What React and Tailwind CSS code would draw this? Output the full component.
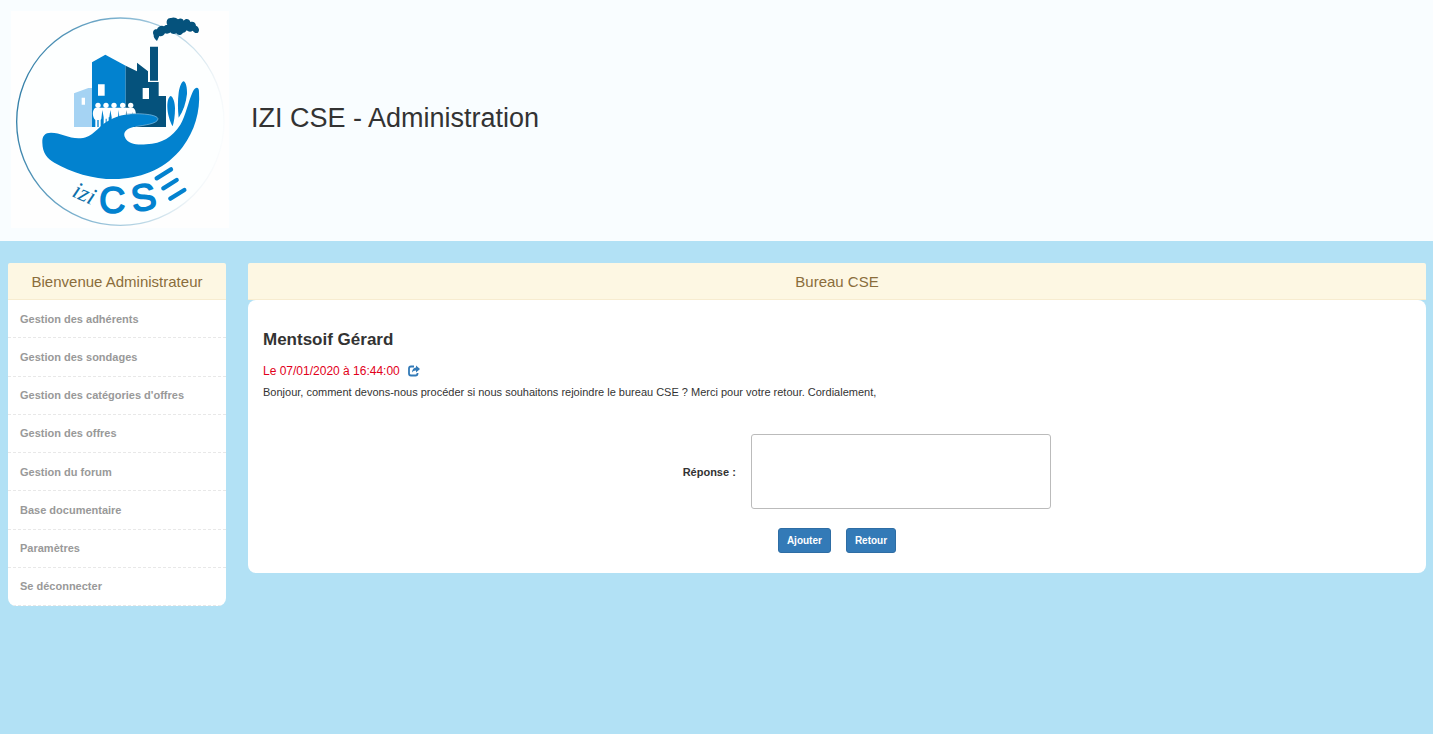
import React from "react";

const MENU = [
  "Gestion des adhérents",
  "Gestion des sondages",
  "Gestion des catégories d'offres",
  "Gestion des offres",
  "Gestion du forum",
  "Base documentaire",
  "Paramètres",
  "Se déconnecter",
];

function Logo() {
  return (
    <svg viewBox="33 33 654 651" className="h-[217px] w-[218px] shrink-0 bg-[#fefefe]" role="img" aria-label="izi CSE">
      <defs>
        <linearGradient id="ring" x1="0" y1="0.4" x2="1" y2="0.6">
          <stop offset="0" stopColor="#3580a8" />
          <stop offset="0.4" stopColor="#7fb3d0" />
          <stop offset="0.7" stopColor="#bcd8e6" />
          <stop offset="0.9" stopColor="#f0f5f8" />
          <stop offset="1" stopColor="#fbfdfe" />
        </linearGradient>
      </defs>
      <circle cx="361" cy="365" r="311" fill="#fdffff" stroke="url(#ring)" strokeWidth="4" />
      <path
        fill="#05527c"
        d="M471 123 C464 116 460 112 461 105 C456 95 462 86 471 88 C474 79 485 75 492 79 C496 75 499 74 502 75 C497 64 502 53 513 54 C520 50 530 53 534 58 C541 53 549 56 551 62 C557 53 569 56 571 66 C580 63 587 68 588 77 C597 81 600 91 594 98 C587 102 581 96 578 92 C573 97 565 96 560 91 C557 97 552 99 549 98 C544 107 533 107 529 100 C521 104 514 101 511 97 C505 103 498 101 495 100 C491 108 484 110 478 108 C475 113 474 118 471 123 Z"
      />
      <path fill="#a5d3f3" d="M222 280 L265 264 H276 V381 H222 Z" />
      <path fill="#0282cf" d="M276 187 L316 164 L377 197 V381 H276 Z" />
      <path fill="#05527c" d="M377 197 L411 214 V188 L444 214 V246 H476 V288 H498 V381 H377 Z M450 140 H474 V242 H450 Z" />
      <path fill="#fff" d="M245 293 H255 V314 H245 Z M294 253 H314 V287 H294 Z M428 264 H447 V297 H428 Z" />
      <g fill="#fff">
        <circle cx="294" cy="316" r="8" />
        <circle cx="318" cy="316" r="8" />
        <circle cx="342" cy="316" r="8" />
        <circle cx="368" cy="316" r="8" />
        <circle cx="392" cy="316" r="8" />
        <path d="M286 323 H398 C405 325 408 334 408 346 L400 350 L397 336 L396 350 H382 L380 330 L378 350 H358 L356 330 L354 352 H349 V381 H344 V356 H341 V381 H335 V352 L331 330 L328 352 H326 V381 H320 V356 H317 V381 H311 V352 L307 330 L304 356 L302 360 V381 H296 V360 H292 V381 H286 V360 C276 350 276 330 286 323 Z" />
      </g>
      <path
        fill="#0282cf"
        d="M127 428 C126 407 135 398 153 398 C180 398 206 414 235 415 C277 415 287 387 319 366 C348 346 383 340 420 341 C447 342 473 345 474 357 C471 374 429 375 400 381 C380 386 369 396 374 410 C384 433 410 435 439 433 C487 430 516 412 541 374 C557 348 565 304 578 276 C586 260 597 259 597 276 C601 334 584 393 548 441 C498 506 431 532 357 537 C286 540 219 520 163 488 C141 475 128 459 127 428 Z"
      />
      <path fill="none" stroke="#8dc0de" strokeWidth="2" d="M376 342 C420 339 473 343 474 357 C471 372 434 375 406 380" />
      <path fill="#0282cf" d="M512 288 C520 291 525 309 525 325 C525 348 522 366 518 379 C510 365 502 340 502 320 C502 305 505 291 512 288 Z M551 244 C558 246 562 265 561 282 C558 309 550 333 536 353 C533 328 533 300 536 278 C539 259 545 245 551 244 Z" />
      <text x="213" y="588" transform="rotate(24 213 588)" fontFamily="Liberation Serif, serif" fontStyle="italic" fontSize="72" fill="#0c70ab">izi</text>
      <text x="298" y="639" fontFamily="Liberation Sans, sans-serif" fontSize="108" fill="#0282cf" stroke="#0282cf" strokeWidth="5" strokeLinejoin="round">C</text>
      <text x="400" y="636" transform="rotate(-9 400 636)" fontFamily="Liberation Sans, sans-serif" fontSize="112" fill="#0282cf" stroke="#0282cf" strokeWidth="5" strokeLinejoin="round">S</text>
      <path fill="none" stroke="#0282cf" strokeWidth="13" strokeLinecap="round" d="M470 535 L513 508 M490 565 L530 540 M511 596 L553 570" />
    </svg>
  );
}

function PanelTitle({ children }) {
  return (
    <h2 className="rounded-t-xs border-b border-[#f7ecd0] bg-[#fdf7e3] pt-[9px] pb-[7px] text-center text-[15px] leading-5 text-[#8a6d3b]">
      {children}
    </h2>
  );
}

export default function App() {
  return (
    <div className="min-h-screen bg-[#b2e1f5] font-['Liberation_Sans',Arial,sans-serif] text-[#333]">
      <header className="flex items-center gap-[22px] bg-[#f9fdff] pt-[11px] pr-2 pb-[13px] pl-[11px]">
        <Logo />
        <h1 className="pb-1 text-[27px] leading-8">IZI CSE - Administration</h1>
      </header>
      <div className="flex items-start gap-[22px] pt-[22px] pr-[7px] pl-2">
        <nav className="w-[218px] shrink-0">
          <PanelTitle>Bienvenue Administrateur</PanelTitle>
          <ul className="grid min-h-[306px] auto-rows-fr overflow-hidden rounded-b-lg bg-white">
            {MENU.map((item) => (
              <li key={item} className="border-b border-dashed border-[#e8e8e8]">
                <a href="#" className="flex h-full items-center px-3 text-[11px] leading-4 font-bold text-[#999]">
                  {item}
                </a>
              </li>
            ))}
          </ul>
        </nav>
        <main className="min-w-0 flex-1">
          <PanelTitle>Bureau CSE</PanelTitle>
          <section className="rounded-lg bg-white pt-7 pb-5">
            <article className="px-[15px]">
              <h3 className="text-[17px] leading-6 font-bold">Mentsoif Gérard</h3>
              <p className="mt-2 flex items-center gap-2 text-[12px] leading-[22px] text-[#e2001a]">
                Le 07/01/2020 à 16:44:00
                <a href="#" aria-label="Répondre" className="text-[#337ab7]">
                  <svg viewBox="0 0 12 12" className="h-3 w-3" fill="none">
                    <path d="M6 1.5 H3 Q1 1.5 1 3.5 V8.5 Q1 10.5 3 10.5 H7.5 Q9.5 10.5 9.5 8.5 V8" stroke="currentColor" strokeWidth="1.8" />
                    <path d="M8 0.5 L12 4 L8 7.5 V5.4 Q5.5 5.2 4 7.5 Q4.2 3 8 2.6 Z" fill="currentColor" />
                  </svg>
                </a>
              </p>
              <p className="mt-[2px] text-[11px] leading-4">
                Bonjour, comment devons-nous procéder si nous souhaitons rejoindre le bureau CSE ? Merci pour votre retour. Cordialement,
              </p>
            </article>
            <form className="mt-[34px]" onSubmit={(e) => e.preventDefault()}>
              <div className="flex items-center">
                <label htmlFor="reponse" className="w-5/12 pr-[3px] text-right text-[11px] leading-4 font-bold">
                  Réponse :
                </label>
                <div className="flex w-7/12 pl-3">
                  <textarea
                    id="reponse"
                    className="h-[75px] w-[300px] resize-none rounded-[3px] border border-[#bbb] bg-white px-3 py-1 text-[11px] outline-none"
                  />
                </div>
              </div>
              <div className="mt-[19px] flex justify-center gap-[15px]">
                <button type="submit" className="h-[25px] rounded-[3px] border border-[#2e6da4] bg-[#337ab7] px-2 text-[10px] leading-4 font-bold text-white">
                  Ajouter
                </button>
                <button type="button" className="h-[25px] rounded-[3px] border border-[#2e6da4] bg-[#337ab7] px-2 text-[10px] leading-4 font-bold text-white">
                  Retour
                </button>
              </div>
            </form>
          </section>
        </main>
      </div>
    </div>
  );
}
